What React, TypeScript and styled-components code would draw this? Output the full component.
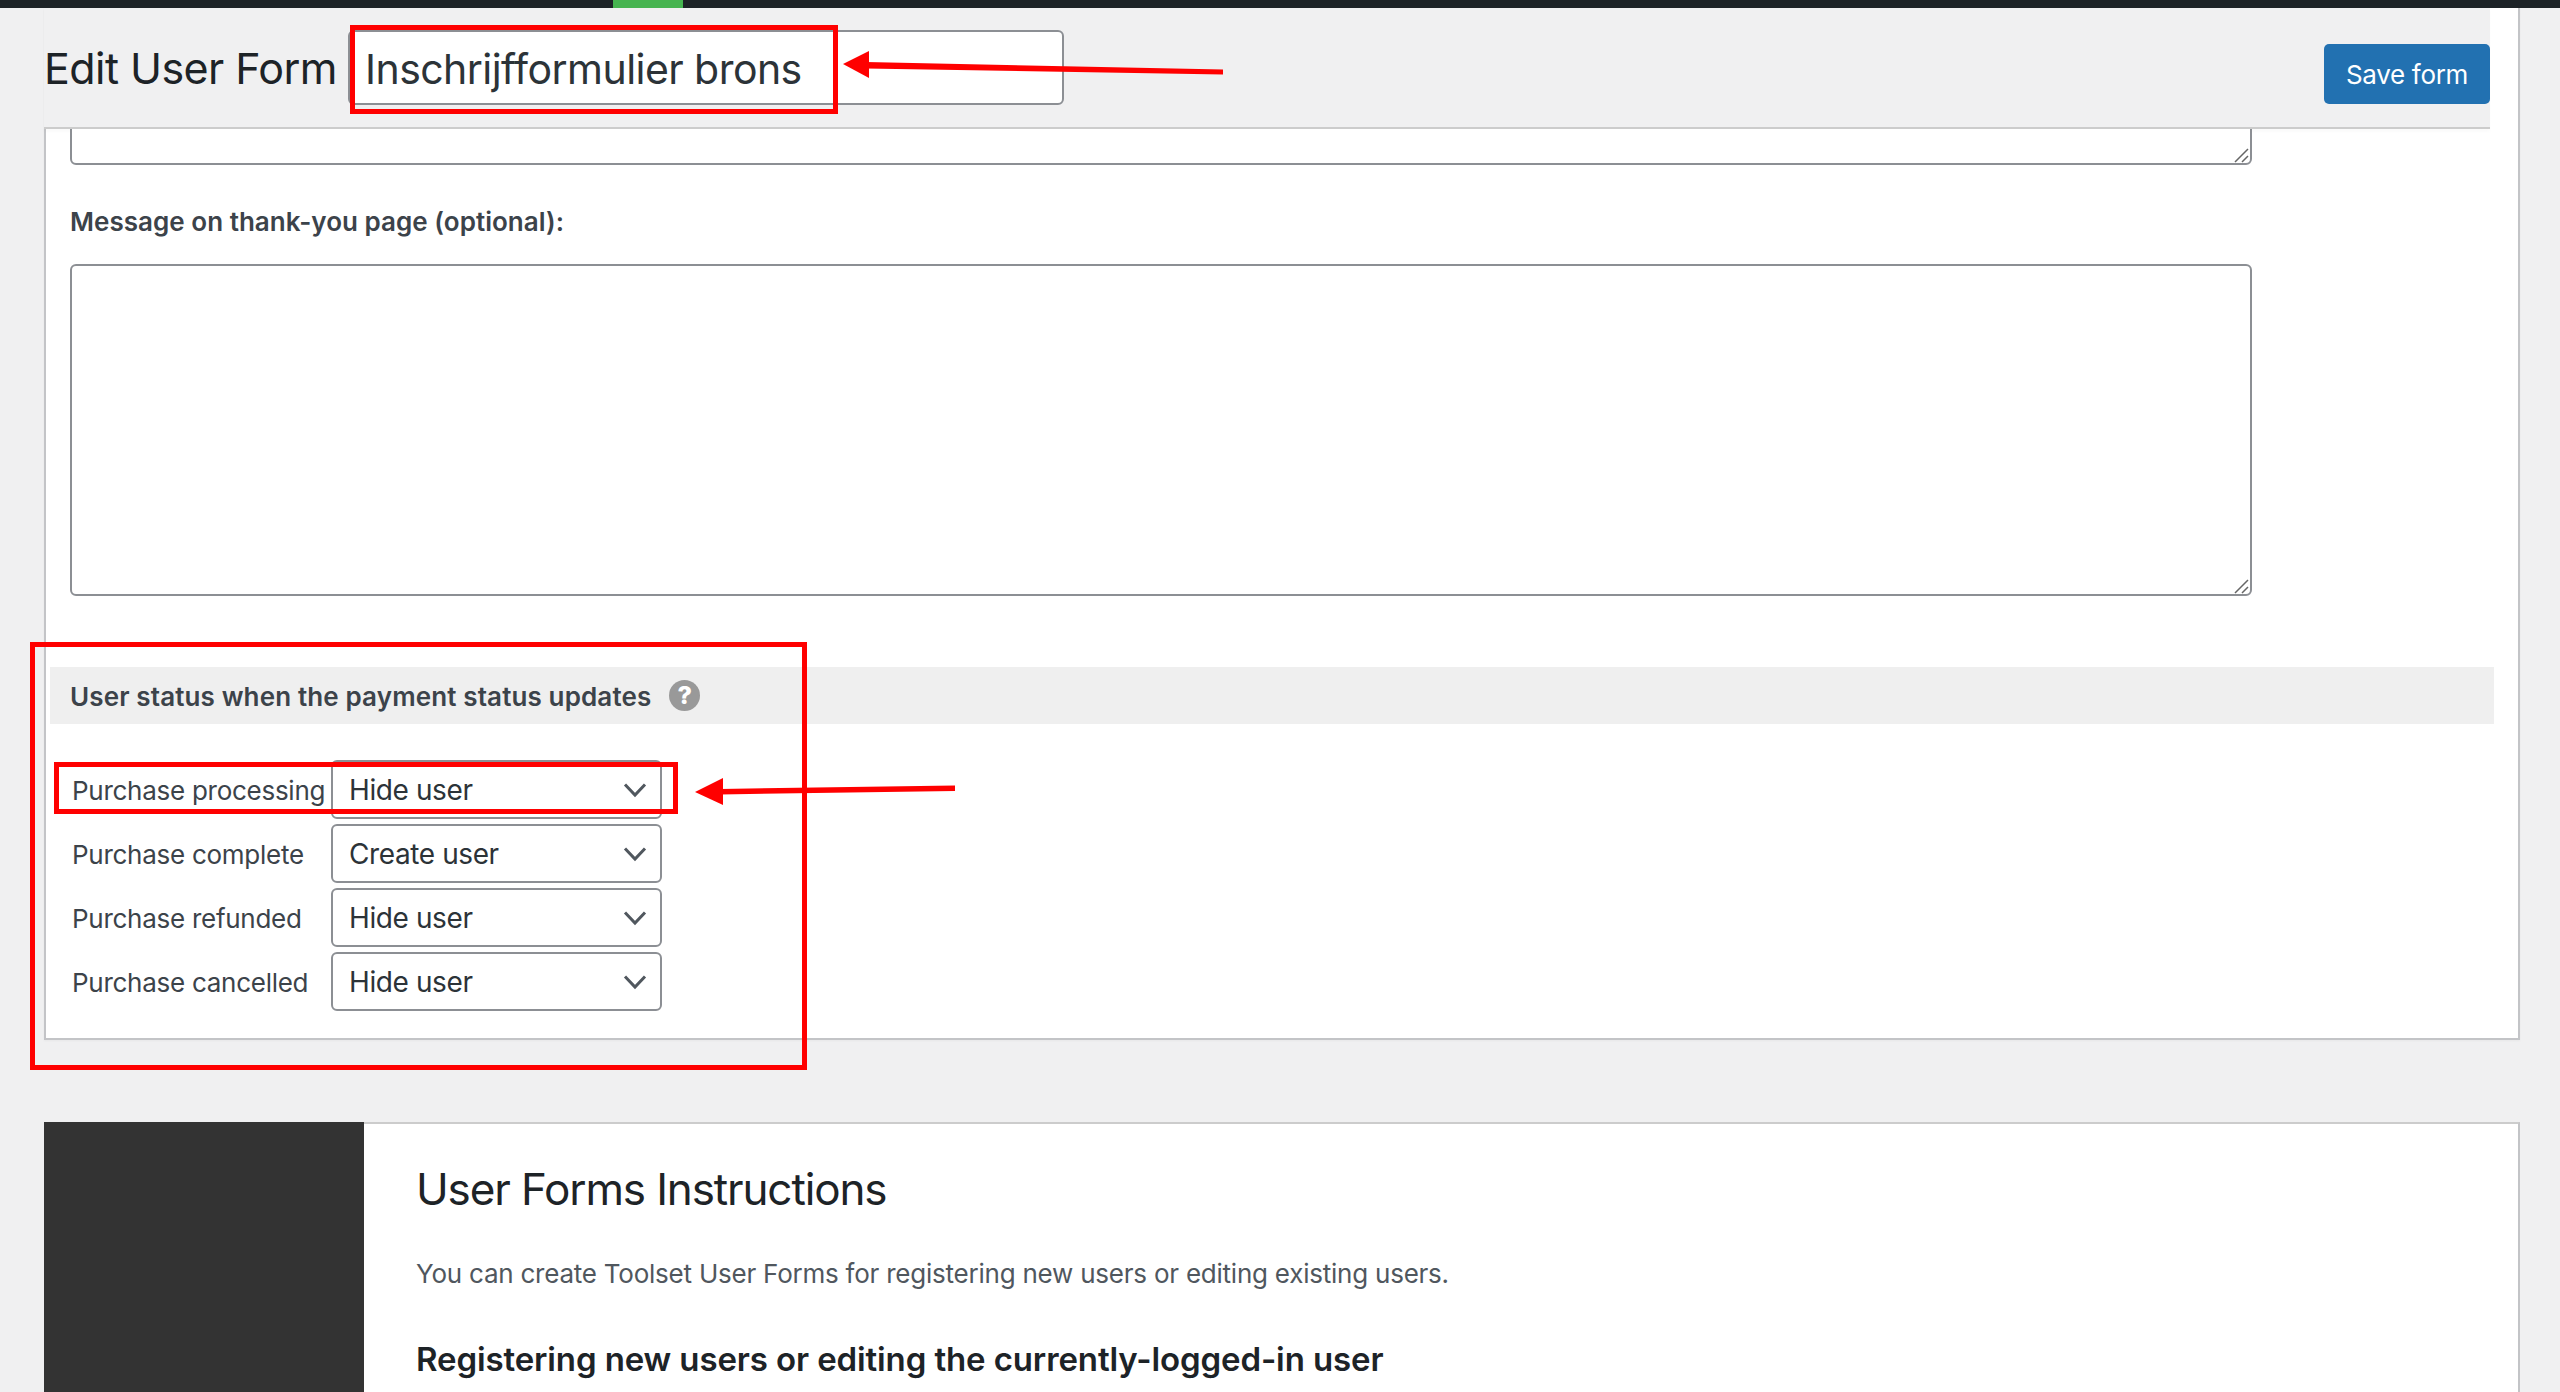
import React from "react";
import styled, { createGlobalStyle } from "styled-components";

const Global = createGlobalStyle`
  html, body { margin: 0; padding: 0; height: 100%; overflow: hidden; background: #f0f0f1; }
  body { font-family: Inter, "Noto Sans", sans-serif; -webkit-font-smoothing: antialiased; }
  * { box-sizing: border-box; }
`;

const Page = styled.div`
  position: relative;
  height: 1392px;
  overflow: hidden;
`;

const TopBar = styled.div`
  height: 8px;
  background: #1d2327;
  padding-left: 613px;
`;

const ActiveTab = styled.div`
  width: 70px;
  height: 8px;
  background: #46b450;
`;

const Main = styled.main`
  margin-left: 44px;
  width: 2476px;
`;

const Panel = styled.section`
  height: 1032px;
  background: #fff;
  border-left: 2px solid #c3c4c7;
  border-right: 2px solid #c3c4c7;
  border-bottom: 2px solid #c3c4c7;
  box-shadow: 0 1px 2px rgba(0, 0, 0, 0.04);
`;

const Header = styled.header`
  display: flex;
  align-items: flex-start;
  height: 121px;
  margin: 0 28px 0 -2px;
  background: #f0f0f1;
  border-bottom: 2px solid #ccc;
  box-shadow: 0 3px 3px rgba(0, 0, 0, 0.02);
  position: relative;
`;

const PageTitle = styled.h1`
  margin: 37px 0 0 0;
  width: 304px;
  font-size: 43px;
  line-height: 46px;
  font-weight: 400;
  letter-spacing: -0.56px;
  color: #1d2327;
  white-space: nowrap;
`;

const TitleInput = styled.input`
  width: 716px;
  height: 75px;
  margin-top: 22px;
  padding: 2px 0 0 15px;
  border: 2px solid #8c8f94;
  border-radius: 6px;
  background: #fff;
  font-family: inherit;
  font-size: 41px;
  letter-spacing: -0.55px;
  color: #2c3338;
  outline: none;
`;

const SaveButton = styled.button`
  margin: 36px 0 0 auto;
  width: 166px;
  height: 60px;
  border: 0;
  border-radius: 5px;
  background: #2271b1;
  color: #fff;
  font-family: inherit;
  font-size: 26px;
  letter-spacing: -0.3px;
  padding: 0;
`;

const Form = styled.div`
  padding-left: 24px;
`;

const CroppedField = styled.div`
  height: 36px;
  width: 2182px;
  overflow: hidden;
  display: flex;
  align-items: flex-end;
`;

const FieldShell = styled.div`
  position: relative;
  flex: none;
  width: 2182px;
`;

const TextBox = styled.textarea<{ $height: number }>`
  display: block;
  width: 100%;
  height: ${(p) => p.$height}px;
  border: 2px solid #8c8f94;
  border-radius: 6px;
  background: #fff;
  resize: none;
  outline: none;
  margin: 0;
`;

const Grip = styled.svg`
  position: absolute;
  right: 3px;
  bottom: 2px;
  width: 15px;
  height: 15px;
  fill: none;
  stroke: #666;
  stroke-width: 1.5;
`;

const FieldLabel = styled.label`
  display: block;
  margin: 41px 0 26px;
  font-size: 26px;
  line-height: 32px;
  font-weight: 600;
  letter-spacing: 0.03px;
  color: #3c434a;
`;

const Band = styled.div`
  display: flex;
  align-items: center;
  gap: 18px;
  height: 57px;
  width: 2444px;
  margin: 71px 0 36px -20px;
  padding: 2px 0 0 20px;
  background: #efefef;
  font-size: 26px;
  font-weight: 600;
  letter-spacing: 0.13px;
  color: #3c434a;
`;

const HelpBadge = styled.span`
  display: inline-flex;
  align-items: center;
  justify-content: center;
  width: 31px;
  height: 31px;
  margin-top: -2px;
  border-radius: 50%;
  background: #999;
  color: #fff;
  font-size: 25px;
  font-weight: 800;
  line-height: 1;
`;

const StatusGrid = styled.div`
  display: grid;
  grid-template-columns: 259px 331px;
  grid-auto-rows: 59px;
  row-gap: 5px;
  align-items: center;
  padding-left: 2px;
`;

const StatusLabel = styled.span`
  padding-top: 1px;
  font-size: 26px;
  letter-spacing: -0.27px;
  color: #3c434a;
  white-space: nowrap;
`;

const SelectBox = styled.div`
  display: flex;
  align-items: center;
  justify-content: space-between;
  height: 59px;
  padding: 1px 13px 0 16px;
  border: 2px solid #8c8f94;
  border-radius: 6px;
  background: #fff;
  font-size: 28px;
  letter-spacing: -0.4px;
  color: #2c3338;
`;

const Chevron = styled.svg`
  width: 24px;
  height: 16px;
  fill: none;
  stroke: #50575e;
  stroke-width: 3;
`;

const InfoCard = styled.section`
  display: flex;
  margin-top: 82px;
  height: 270px;
  background: #fff;
  border-top: 2px solid #ccc;
  border-right: 2px solid #c3c4c7;
`;

const DarkSide = styled.div`
  flex: none;
  width: 320px;
  margin-top: -2px;
  background: #333;
`;

const InfoBody = styled.div`
  padding-left: 52px;
`;

const InfoTitle = styled.h2`
  margin: 38px 0 0;
  font-size: 44px;
  line-height: 54px;
  font-weight: 400;
  letter-spacing: -1.13px;
  color: #1d2327;
  white-space: nowrap;
`;

const InfoText = styled.p`
  margin: 41px 0 0;
  font-size: 26px;
  line-height: 34px;
  letter-spacing: -0.23px;
  color: #50575e;
  white-space: nowrap;
`;

const InfoSubtitle = styled.h3`
  margin: 47px 0 0;
  font-size: 33px;
  line-height: 42px;
  font-weight: 600;
  letter-spacing: -0.12px;
  color: #1d2327;
  white-space: nowrap;
`;

const RedFrame = styled.div<{ $x: number; $y: number; $w: number; $h: number }>`
  position: absolute;
  left: ${(p) => p.$x}px;
  top: ${(p) => p.$y}px;
  width: ${(p) => p.$w}px;
  height: ${(p) => p.$h}px;
  border: 5px solid #ff0000;
  pointer-events: none;
`;

const ArrowLayer = styled.svg`
  position: absolute;
  inset: 0;
  width: 2560px;
  height: 1392px;
  pointer-events: none;
`;

const rows = [
  ["Purchase processing", "Hide user"],
  ["Purchase complete", "Create user"],
  ["Purchase refunded", "Hide user"],
  ["Purchase cancelled", "Hide user"],
];

const GripMark = () => (
  <Grip viewBox="0 0 15 15">
    <path d="M1 14 14 1M8 14 14 8" />
  </Grip>
);

export default function App() {
  return (
    <Page>
      <Global />
      <TopBar>
        <ActiveTab />
      </TopBar>
      <Main>
        <Panel>
          <Header>
            <PageTitle>Edit User Form</PageTitle>
            <TitleInput readOnly value="Inschrijfformulier brons" />
            <SaveButton>Save form</SaveButton>
          </Header>
          <Form>
            <CroppedField>
              <FieldShell>
                <TextBox $height={120} readOnly />
                <GripMark />
              </FieldShell>
            </CroppedField>
            <FieldLabel>Message on thank-you page (optional):</FieldLabel>
            <FieldShell>
              <TextBox $height={332} readOnly />
              <GripMark />
            </FieldShell>
            <Band>
              User status when the payment status updates
              <HelpBadge>?</HelpBadge>
            </Band>
            <StatusGrid>
              {rows.map(([label, value]) => (
                <React.Fragment key={label}>
                  <StatusLabel>{label}</StatusLabel>
                  <SelectBox>
                    {value}
                    <Chevron viewBox="0 0 24 16">
                      <path d="M2 2.5 12 13 22 2.5" />
                    </Chevron>
                  </SelectBox>
                </React.Fragment>
              ))}
            </StatusGrid>
          </Form>
        </Panel>
        <InfoCard>
          <DarkSide />
          <InfoBody>
            <InfoTitle>User Forms Instructions</InfoTitle>
            <InfoText>You can create Toolset User Forms for registering new users or editing existing users.</InfoText>
            <InfoSubtitle>Registering new users or editing the currently-logged-in user</InfoSubtitle>
          </InfoBody>
        </InfoCard>
      </Main>
      <RedFrame $x={350} $y={25} $w={488} $h={89} />
      <RedFrame $x={54} $y={762} $w={624} $h={52} />
      <RedFrame $x={30} $y={642} $w={777} $h={428} />
      <ArrowLayer viewBox="0 0 2560 1392">
        <path d="M1223 69.5 866 62 866 68.5 1223 74.5Z" fill="#ff0000" />
        <path d="M843 64 869 51 869 78Z" fill="#ff0000" />
        <path d="M955 785.5 720 789 720 794.5 955 791Z" fill="#ff0000" />
        <path d="M695 792 723 778 723 805Z" fill="#ff0000" />
      </ArrowLayer>
    </Page>
  );
}
